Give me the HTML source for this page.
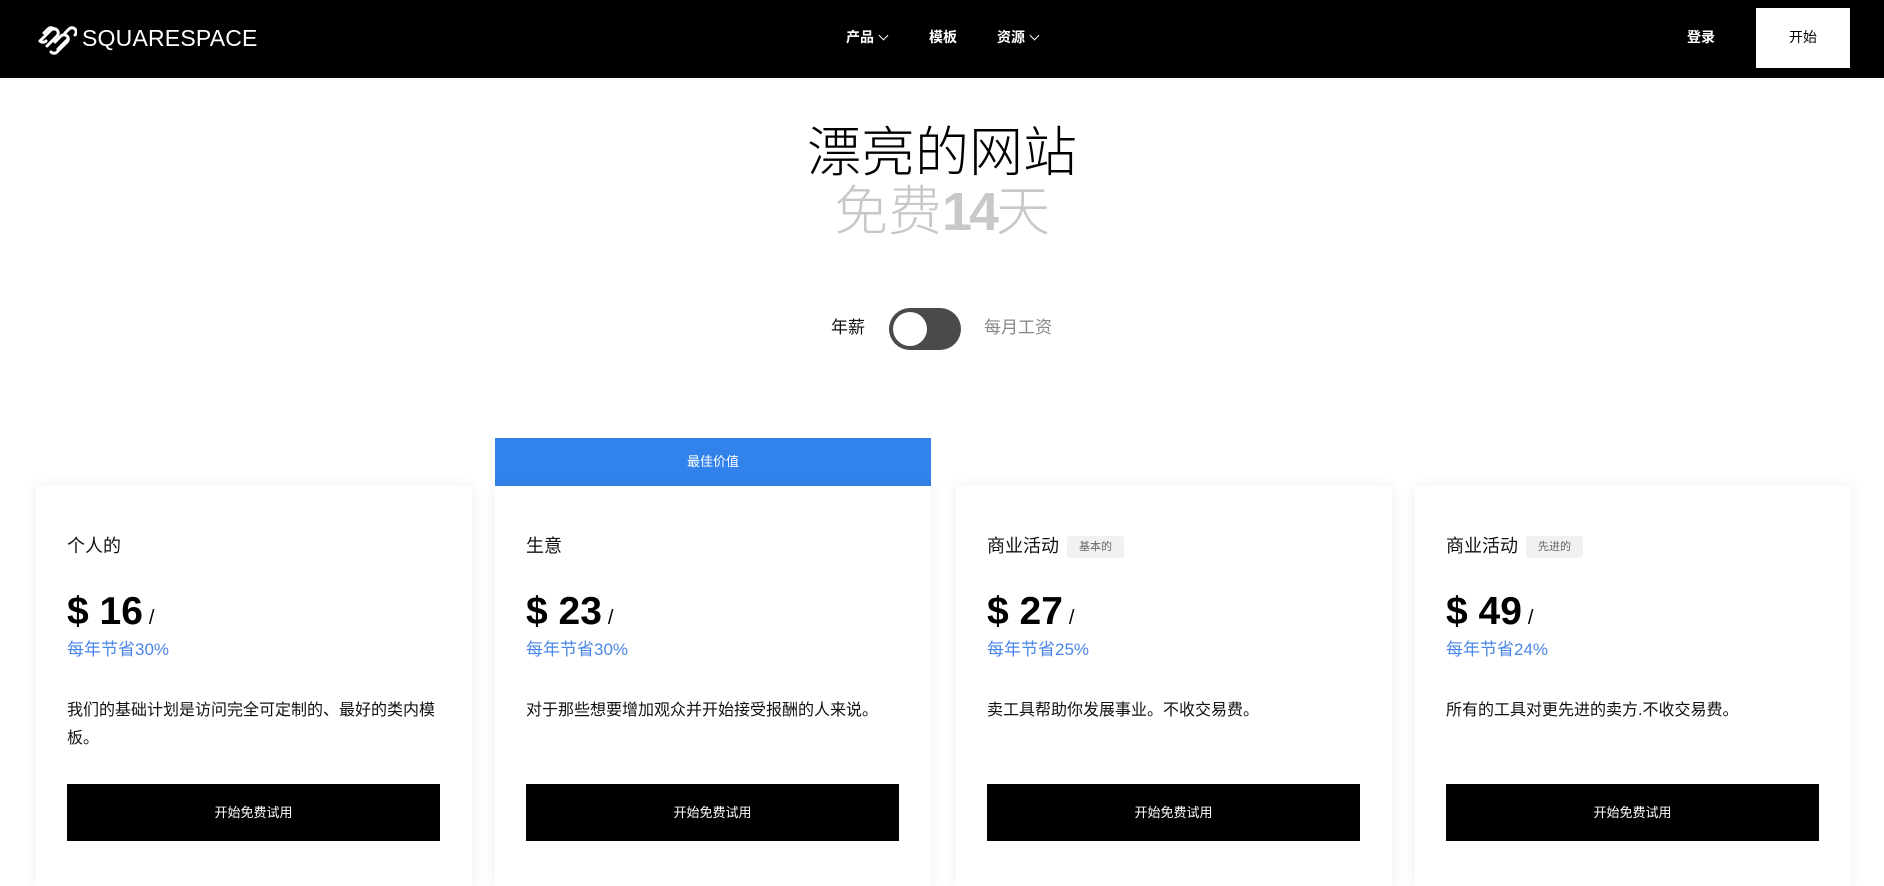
<!DOCTYPE html>
<html><head><meta charset="utf-8"><style>
*{margin:0;padding:0;box-sizing:border-box}
body{width:1884px;height:852px;overflow:hidden;background:#fff;font-family:"Liberation Sans","Noto Sans CJK SC",sans-serif;position:relative}
.hdr{position:absolute;left:0;top:0;width:1884px;height:78px;background:#000;color:#fff}
.abs{position:absolute;white-space:nowrap}
.nav{font-size:14px;font-weight:bold;top:29px;line-height:16px}
.chev{display:inline-block;width:7px;height:7px;border-right:1.6px solid #fff;border-bottom:1.6px solid #fff;transform:rotate(45deg);margin-left:6px;position:relative;top:-3px}
.card{position:absolute;top:486px;width:436px;height:400px;background:#fff;box-shadow:0 0 12px rgba(0,0,0,.08)}
.card .t{position:absolute;left:31px;top:50px;font-size:18px;color:#111;line-height:20px}
.badge{display:inline-block;background:#f1f1f1;color:#666;font-size:11px;border-radius:3px;padding:0 12px;height:22px;line-height:22px;margin-left:8px;vertical-align:2px}
.card .p{position:absolute;left:31px;top:104px;font-size:39px;font-weight:bold;color:#000;line-height:44px}
.card .p small{font-size:20px;font-weight:normal;margin-left:6px}
.card .s{position:absolute;left:31px;top:154px;font-size:17px;color:#4a86e8;line-height:20px}
.card .d{position:absolute;left:31px;top:211px;width:374px;font-size:16px;color:#111;line-height:28px;white-space:normal}
.card .b{position:absolute;left:31px;top:298px;width:373px;height:57px;background:#000;color:#fff;font-size:13px;text-align:center;line-height:57px}
</style></head><body>
<div class="hdr">
<svg class="abs" style="left:35px;top:22px" width="42" height="34" viewBox="0 0 42 34" fill="none" stroke="#fff" stroke-width="3" stroke-linecap="round">
<path d="M5 19 L16 8 a4.2 4.2 0 0 1 6 6 L12 24"/>
<path d="M9 11 L13 7 a4.2 4.2 0 0 1 6 0"/>
<path d="M5 19 a4.2 4.2 0 0 0 6 0"/>
<path d="M20 20 L26 14 a4.2 4.2 0 0 1 6 6 L22 30 a4.2 4.2 0 0 1 -6 0"/>
<path d="M23 27 L33 17"/>
<path d="M30 11 L34 7 a4.2 4.2 0 0 1 6 6"/>
</svg>
<div class="abs" style="left:82px;top:24px;font-size:23px;line-height:28px;color:#fff;letter-spacing:0.2px">SQUARESPACE</div>
<div class="abs nav" style="left:846px">产品<span class="chev"></span></div>
<div class="abs nav" style="left:929px">模板</div>
<div class="abs nav" style="left:997px">资源<span class="chev"></span></div>
<div class="abs nav" style="left:1687px">登录</div>
<div class="abs" style="left:1756px;top:8px;width:94px;height:60px;background:#fff;color:#000;font-size:14px;text-align:center;line-height:58px">开始</div>
</div>
<div class="abs" style="left:0;width:1884px;top:123px;text-align:center;font-size:54px;line-height:60px;color:#000;font-weight:300">漂亮的网站</div>
<div class="abs" style="left:0;width:1884px;top:182px;text-align:center;font-size:54px;line-height:60px;color:#c8c8c8;font-weight:300">免费<b style="font-weight:bold;letter-spacing:-3px">14</b>天</div>
<div class="abs" style="left:831px;top:318px;font-size:17px;line-height:20px;color:#111">年薪</div>
<div class="abs" style="left:889px;top:308px;width:72px;height:42px;border-radius:21px;background:#4a4a4a"><div style="position:absolute;left:4px;top:4px;width:34px;height:34px;border-radius:50%;background:#fff"></div></div>
<div class="abs" style="left:984px;top:318px;font-size:17px;line-height:20px;color:#888">每月工资</div>

<div class="card" style="left:36px"><div class="t">个人的</div><div class="p">$ 16<small>/</small></div><div class="s">每年节省30%</div><div class="d">我们的基础计划是访问完全可定制的、最好的类内模板。</div><div class="b">开始免费试用</div></div>
<div class="abs" style="left:495px;top:438px;width:436px;height:48px;background:#3182eb;color:#fff;font-size:13px;text-align:center;line-height:48px">最佳价值</div>
<div class="card" style="left:495px"><div class="t">生意</div><div class="p">$ 23<small>/</small></div><div class="s">每年节省30%</div><div class="d">对于那些想要增加观众并开始接受报酬的人来说。</div><div class="b">开始免费试用</div></div>
<div class="card" style="left:956px"><div class="t">商业活动<span class="badge">基本的</span></div><div class="p">$ 27<small>/</small></div><div class="s">每年节省25%</div><div class="d">卖工具帮助你发展事业。不收交易费。</div><div class="b">开始免费试用</div></div>
<div class="card" style="left:1415px"><div class="t">商业活动<span class="badge">先进的</span></div><div class="p">$ 49<small>/</small></div><div class="s">每年节省24%</div><div class="d">所有的工具对更先进的卖方.不收交易费。</div><div class="b">开始免费试用</div></div>
</body></html>
